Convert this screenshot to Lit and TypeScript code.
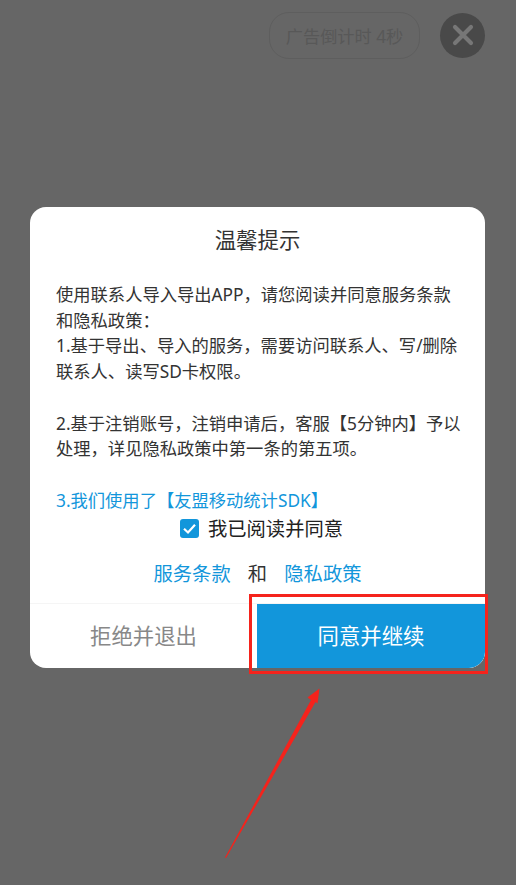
import { LitElement, html, css } from "lit";
import { customElement } from "lit/decorators.js";

@customElement("app-root")
export class AppRoot extends LitElement {
  static styles = css`
    :host {
      display: block;
      position: relative;
      width: 516px;
      height: 885px;
      overflow: hidden;
      background: #666666;
      font-family: "Noto Sans", "Noto Sans CJK SC", sans-serif;
    }
    .top {
      display: flex;
      justify-content: flex-end;
      align-items: center;
      gap: 20px;
      padding: 12px 31px 0 0;
      height: 46px;
    }
    .pill {
      box-sizing: border-box;
      width: 151px;
      height: 47px;
      border: 1.5px solid #5e5e5e;
      border-radius: 20px;
      display: flex;
      align-items: center;
      justify-content: center;
      color: #585858;
      font-size: 17.2px;
    }
    .close {
      width: 45px;
      height: 45px;
      border-radius: 50%;
      background: #494949;
      display: flex;
      align-items: center;
      justify-content: center;
    }
    .card {
      box-sizing: border-box;
      margin: 149px 0 0 30px;
      width: 455px;
      height: 461px;
      background: #fff;
      border-radius: 16px;
      display: flex;
      flex-direction: column;
      overflow: hidden;
    }
    .title {
      margin-top: 16px;
      text-align: center;
      font-size: 21.4px;
      line-height: 34px;
      color: #333;
    }
    .body {
      margin: 25px 24px 0 26px;
      font-size: 17.3px;
      line-height: 25.7px;
      color: #333;
    }
    .body p {
      margin: 0 0 25.7px;
    }
    .body p.tight {
      margin: 0;
    }
    .blue {
      color: #1296db;
    }
    .agree {
      display: flex;
      align-items: center;
      justify-content: center;
      gap: 9px;
      height: 30px;
      padding-left: 8px;
      font-size: 19.3px;
      color: #222;
    }
    .box {
      width: 19px;
      height: 19px;
      border-radius: 3px;
      background: #1296db;
      display: flex;
      align-items: center;
      justify-content: center;
    }
    .links {
      display: flex;
      justify-content: center;
      gap: 17.2px;
      margin-top: 16px;
      font-size: 19.3px;
      line-height: 30px;
      color: #333;
    }
    .actions {
      margin-top: auto;
      height: 65px;
      display: flex;
      flex: none;
      box-sizing: border-box;
      border-top: 1px solid #f5f5f5;
      font-size: 21.4px;
    }
    .reject {
      width: 227px;
      display: flex;
      align-items: center;
      justify-content: center;
      padding-bottom: 3px;
      box-sizing: border-box;
      color: #888;
    }
    .accept {
      flex: 1;
      background: #1296db;
      color: #fff;
      display: flex;
      align-items: center;
      justify-content: center;
      padding-bottom: 3px;
      box-sizing: border-box;
      border-bottom-right-radius: 16px;
    }
    .mark {
      position: absolute;
      left: 249px;
      top: 594px;
      width: 239px;
      height: 80px;
      box-sizing: border-box;
      border: 3px solid #f5231c;
    }
    .arrow {
      position: absolute;
      left: 0;
      top: 0;
    }
  `;

  render() {
    return html`
      <div class="top">
        <div class="pill">广告倒计时 4秒</div>
        <div class="close">
          <svg width="22" height="22" viewBox="0 0 22 22">
            <path d="M3 3L19 19M19 3L3 19" stroke="#777" stroke-width="4.2" stroke-linecap="round" fill="none" />
          </svg>
        </div>
      </div>
      <div class="card">
        <div class="title">温馨提示</div>
        <div class="body">
          <p class="tight">使用联系人导入导出APP，请您阅读并同意服务条款和隐私政策：</p>
          <p>1.基于导出、导入的服务，需要访问联系人、写/删除联系人、读写SD卡权限。</p>
          <p>2.基于注销账号，注销申请后，客服【5分钟内】予以处理，详见隐私政策中第一条的第五项。</p>
          <p class="tight blue">3.我们使用了【友盟移动统计SDK】</p>
        </div>
        <div class="agree">
          <span class="box">
            <svg width="15" height="15" viewBox="0 0 15 15">
              <path d="M2 7.8L6 11.5L13 3.8" stroke="#fff" stroke-width="2.2" fill="none" />
            </svg>
          </span>
          <span>我已阅读并同意</span>
        </div>
        <div class="links">
          <span class="blue">服务条款</span><span>和</span><span class="blue">隐私政策</span>
        </div>
        <div class="actions">
          <div class="reject">拒绝并退出</div>
          <div class="accept">同意并继续</div>
        </div>
      </div>
      <div class="mark"></div>
      <svg class="arrow" width="516" height="885" viewBox="0 0 516 885">
        <path d="M225 857.5L311 700L307.5 697.5L319.5 688.5L317.5 703.5L315.5 702L226 858Z" fill="#f5231c" />
      </svg>
    `;
  }
}
